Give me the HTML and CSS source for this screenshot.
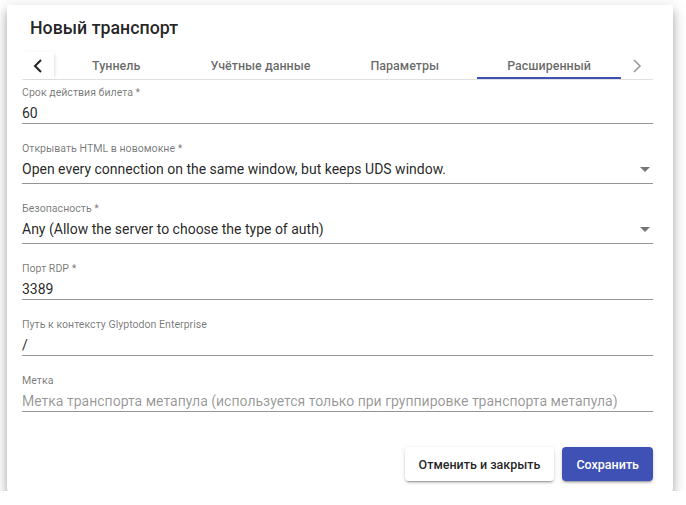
FILE: index.html
```html
<!DOCTYPE html>
<html lang="ru">
<head>
<meta charset="utf-8">
<title>Новый транспорт</title>
<link rel="stylesheet" href="styles.css">
</head>
<body>
<div class="dialog">
  <h2 class="title">Новый транспорт</h2>
  <div class="tab-header">
    <div class="pager pager-left">
      <svg width="10" height="14" viewBox="0 0 10 14"><polyline points="8,1 2,7 8,13" fill="none" stroke="#222" stroke-width="2"/></svg>
    </div>
    <div class="tab-list">
      <div class="tabs">
        <div class="tab">Туннель</div>
        <div class="tab">Учётные данные</div>
        <div class="tab">Параметры</div>
        <div class="tab active">Расширенный</div>
      </div>
    </div>
    <div class="pager pager-right">
      <svg width="10" height="14" viewBox="0 0 10 14"><polyline points="2,1 8,7 2,13" fill="none" stroke="#9a9a9a" stroke-width="1.6"/></svg>
    </div>
  </div>

  <div class="fields">
    <div class="field">
      <div class="label">Срок действия билета *</div>
      <div class="value">60</div>
    </div>
    <div class="field select">
      <div class="label">Открывать HTML в новомокне *</div>
      <div class="value">Open every connection on the same window, but keeps UDS window.<span class="arrow"></span></div>
    </div>
    <div class="field select">
      <div class="label">Безопасность *</div>
      <div class="value">Any (Allow the server to choose the type of auth)<span class="arrow"></span></div>
    </div>
    <div class="field">
      <div class="label">Порт RDP *</div>
      <div class="value">3389</div>
    </div>
    <div class="field">
      <div class="label">Путь к контексту Glyptodon Enterprise</div>
      <div class="value">/</div>
    </div>
    <div class="field">
      <div class="label">Метка</div>
      <div class="value placeholder">Метка транспорта метапула (используется только при группировке транспорта метапула)</div>
    </div>
  </div>

  <div class="actions">
    <button class="btn btn-cancel">Отменить и закрыть</button>
    <button class="btn btn-save">Сохранить</button>
  </div>
</div>
</body>
</html>
```

FILE: styles.css
```css
html, body {
  margin: 0;
  padding: 0;
  background: #ffffff;
}

body {
  font-family: Roboto, "Noto Sans", "Liberation Sans", sans-serif;
  color: rgba(0, 0, 0, 0.87);
}

.dialog {
  box-sizing: border-box;
  width: 666px;
  height: 486px;
  margin: 5px 0 0 7px;
  padding: 11px 20px 10px 15px;
  background: #fff;
  border-radius: 2px;
  box-shadow: 0 6px 6px -3px rgba(0, 0, 0, 0.25),
              0 8px 10px 1px rgba(0, 0, 0, 0.16),
              0 3px 14px 2px rgba(0, 0, 0, 0.13);
  display: flex;
  flex-direction: column;
}

.title {
  margin: 0 0 12px 8px;
  font-size: 17.8px;
  line-height: 24px;
  font-weight: 500;
  color: rgba(0, 0, 0, 0.87);
}

.tab-header {
  display: flex;
  height: 27px;
  border-bottom: 1px solid rgba(0, 0, 0, 0.12);
}

.pager {
  width: 32px;
  flex: none;
  display: flex;
  align-items: center;
  justify-content: center;
  position: relative;
  z-index: 1;
  background: #fff;
}

.pager-left {
  box-shadow: 2px 0 4px -2px rgba(0, 0, 0, 0.2);
}

.tab-list {
  flex: 1;
  overflow: hidden;
}

.tabs {
  display: flex;
  height: 100%;
  margin-left: -10px;
}

.tab {
  flex: none;
  width: 144.3px;
  box-sizing: border-box;
  display: flex;
  align-items: center;
  justify-content: center;
  font-size: 12.5px;
  font-weight: 500;
  color: rgba(0, 0, 0, 0.6);
  height: 100%;
}

.tab.active {
  border-bottom: 2px solid #3f51b5;
  padding-top: 2px;
}

.fields {
  display: flex;
  flex-direction: column;
  gap: 18.1px;
  margin-top: 6px;
}

.field {
  border-bottom: 1px solid rgba(0, 0, 0, 0.42);
}

.field.select {
  padding-bottom: 4px;
}

.label {
  font-size: 10.6px;
  line-height: 14px;
  color: rgba(0, 0, 0, 0.54);
  height: 14px;
  white-space: nowrap;
}

.value {
  margin-top: 3px;
  font-size: 14px;
  line-height: 20px;
  height: 20px;
  color: rgba(0, 0, 0, 0.87);
  white-space: nowrap;
  display: flex;
  align-items: center;
}

.value.placeholder {
  color: rgba(0, 0, 0, 0.42);
}

.arrow {
  margin-left: auto;
  margin-right: 3px;
  width: 0;
  height: 0;
  border-left: 5px solid transparent;
  border-right: 5px solid transparent;
  border-top: 5px solid rgba(0, 0, 0, 0.54);
}

.actions {
  margin-top: auto;
  display: flex;
  justify-content: flex-end;
  gap: 8px;
}

.btn {
  height: 34px;
  padding: 0 14px;
  border: none;
  border-radius: 4px;
  font-family: Roboto, "Noto Sans", "Liberation Sans", sans-serif;
  font-size: 12.5px;
  font-weight: 500;
  cursor: pointer;
}

.btn-cancel {
  background: #fff;
  color: rgba(0, 0, 0, 0.87);
  box-shadow: 0 3px 1px -2px rgba(0, 0, 0, 0.2),
              0 2px 2px 0 rgba(0, 0, 0, 0.14),
              0 1px 5px 0 rgba(0, 0, 0, 0.12);
}

.btn-save {
  background: #3f51b5;
  color: #fff;
  box-shadow: 0 3px 1px -2px rgba(0, 0, 0, 0.2),
              0 2px 2px 0 rgba(0, 0, 0, 0.14),
              0 1px 5px 0 rgba(0, 0, 0, 0.12);
}
```
